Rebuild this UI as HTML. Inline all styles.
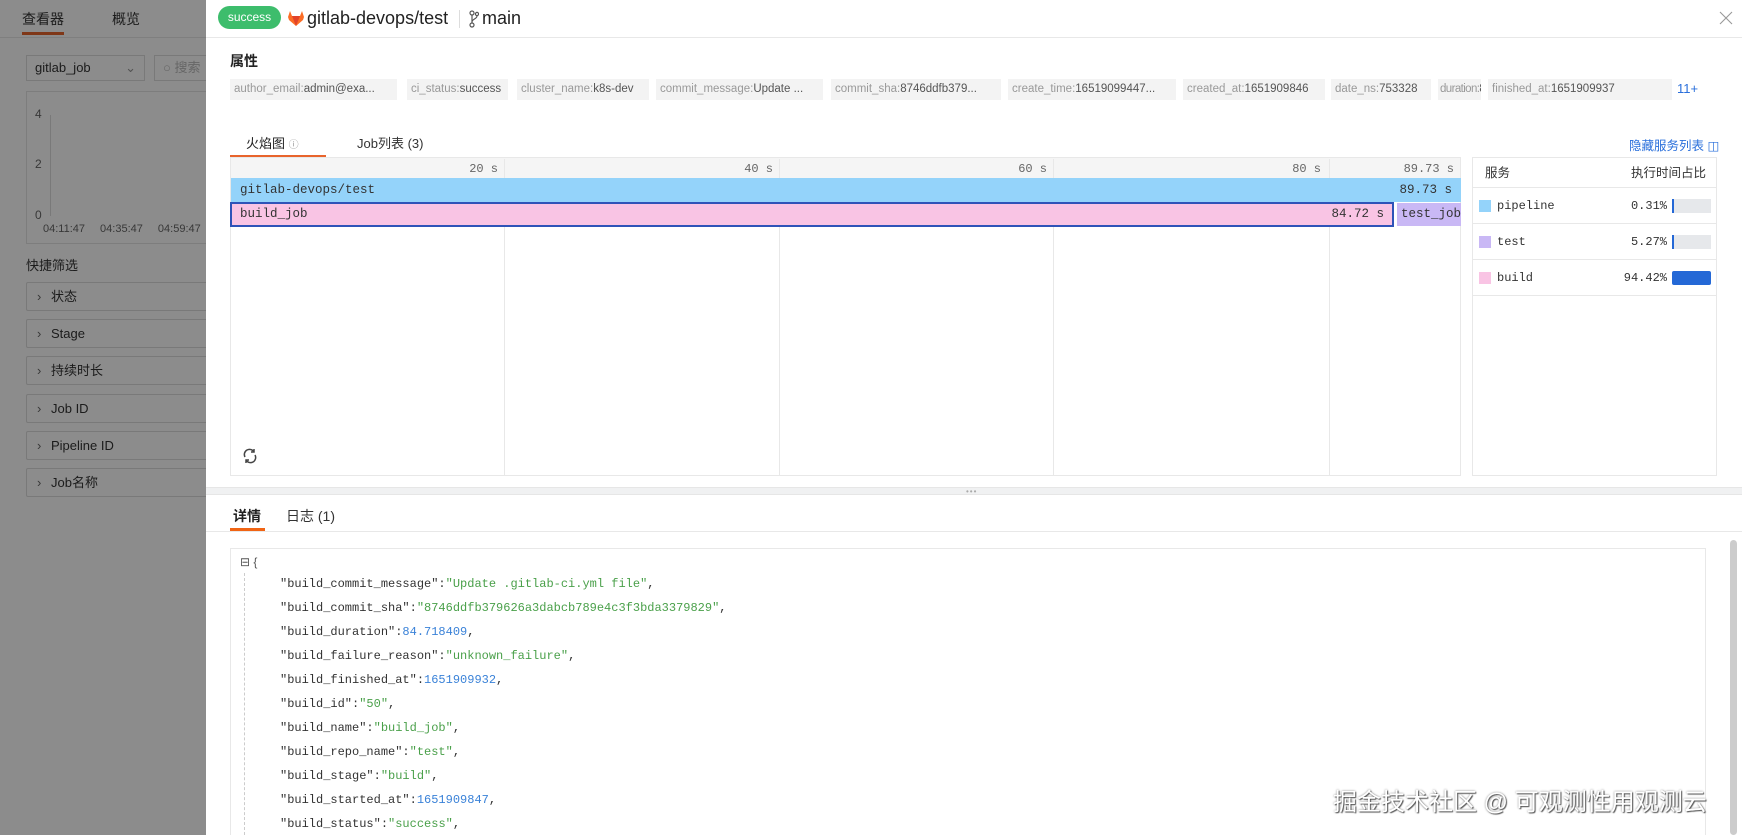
<!DOCTYPE html>
<html><head><meta charset="utf-8"><style>
*{box-sizing:border-box;margin:0;padding:0}
html,body{width:1742px;height:835px;overflow:hidden}
body{position:relative;background:#fff;font-family:"Liberation Sans","Noto Sans CJK SC",sans-serif;color:#333}
.abs{position:absolute}
.mono{font-family:"Liberation Mono","DejaVu Sans Mono",monospace}
#left{left:0;top:0;width:206px;height:835px;background:#fff}
#ov{left:0;top:0;width:206px;height:835px;background:rgba(0,0,0,0.45)}
.fi{position:absolute;left:26px;width:190px;height:29px;border:1px solid #ddd;border-radius:2px;font-size:13px;line-height:27px;padding-left:24px;color:#333}
.fi:before{content:"›";position:absolute;left:10px;color:#666}
#drawer{left:206px;top:0;width:1536px;height:835px;background:#fff}
.tag{position:absolute;top:79px;height:21px;background:#f3f3f3;font-size:11.5px;line-height:21px;padding:0 4px;color:#999;white-space:nowrap;overflow:hidden}
.tag b{font-weight:normal;color:#555}
.vl{position:absolute;top:159px;width:1px;height:317px;background:#e8e8e8}
.ax{position:absolute;top:162px;font-size:12px;color:#666}
.row{position:absolute;left:1473px;width:243px;height:36px;border-bottom:1px solid #e8e8e8;font-size:12px}
.sw{position:absolute;left:6px;top:12px;width:12px;height:12px}
.bar{position:absolute;left:199px;top:11px;width:39px;height:14px;background:#e6e8eb}
.jl{position:absolute;left:280px;font-size:12px;white-space:pre}
.s{color:#4aa04a}.n{color:#3a82d8}
</style></head><body>
<div id="left" class="abs">
 <div class="abs" style="left:22px;top:9px;font-size:14px">查看器</div>
 <div class="abs" style="left:112px;top:9px;font-size:14px">概览</div>
 <div class="abs" style="left:22px;top:32px;width:42px;height:3px;background:#e8642c"></div>
 <div class="abs" style="left:0;top:37px;width:206px;height:1px;background:#e8e8e8"></div>
 <div class="abs" style="left:26px;top:55px;width:119px;height:26px;border:1px solid #ddd;font-size:13px;line-height:24px;padding-left:8px">gitlab_job<span style="position:absolute;right:8px;color:#999">⌄</span></div>
 <div class="abs" style="left:154px;top:55px;width:60px;height:26px;border:1px solid #ddd;font-size:13px;line-height:24px;padding-left:8px;color:#bbb">○ 搜索</div>
 <div class="abs" style="left:26px;top:91px;width:190px;height:153px;border:1px solid #e3e3e3"></div>
 <div class="abs" style="left:50px;top:115px;width:1px;height:101px;background:#ddd"></div>
 <div class="abs" style="left:35px;top:107px;font-size:12px;color:#666">4</div>
 <div class="abs" style="left:35px;top:157px;font-size:12px;color:#666">2</div>
 <div class="abs" style="left:35px;top:208px;font-size:12px;color:#666">0</div>
 <div class="abs" style="left:43px;top:223px;font-size:11px;color:#666;word-spacing:12px">04:11:47 04:35:47 04:59:47</div>
 <div class="abs" style="left:26px;top:255px;font-size:13px">快捷筛选</div>
 <div class="fi" style="top:282px">状态</div>
 <div class="fi" style="top:319px">Stage</div>
 <div class="fi" style="top:356px">持续时长</div>
 <div class="fi" style="top:394px">Job ID</div>
 <div class="fi" style="top:431px">Pipeline ID</div>
 <div class="fi" style="top:468px">Job名称</div>
</div>
<div id="ov" class="abs"></div>
<div id="drawer" class="abs"></div>
<div class="abs" style="left:218px;top:6px;width:63px;height:23px;border-radius:12px;background:#3dbd6c;color:#fff;font-size:12px;line-height:23px;text-align:center">success</div>
<svg class="abs" style="left:288px;top:11px" width="16" height="15" viewBox="0 0 16 15"><path d="M8 15L1 9 0 6 2 0 4 5H12L14 0 16 6 15 9Z" fill="#fc6d26"/><path d="M8 15L4 5H12Z" fill="#e24329"/></svg>
<div class="abs" style="left:307px;top:8px;font-size:18px;color:#222">gitlab-devops/test</div>
<div class="abs" style="left:459px;top:10px;width:1px;height:18px;background:#ddd"></div>
<svg class="abs" style="left:469px;top:10px" width="10" height="18" viewBox="0 0 10 18"><circle cx="3" cy="3" r="2" fill="none" stroke="#555" stroke-width="1.2"/><circle cx="3" cy="15" r="2" fill="none" stroke="#555" stroke-width="1.2"/><circle cx="8" cy="4" r="1.6" fill="none" stroke="#555" stroke-width="1.2"/><path d="M3 5V13M8 6C8 9 3 9 3 12" fill="none" stroke="#555" stroke-width="1.2"/></svg>
<div class="abs" style="left:482px;top:8px;font-size:18px;color:#222">main</div>
<svg class="abs" style="left:1719px;top:11px" width="14" height="14" viewBox="0 0 14 14"><path d="M1 1L13 13M13 1L1 13" stroke="#999" stroke-width="1.1"/></svg>
<div class="abs" style="left:206px;top:37px;width:1536px;height:1px;background:#e8e8e8"></div>
<div class="abs" style="left:230px;top:51px;font-size:14px;font-weight:bold;color:#222">属性</div>
<div class="tag" style="left:230px;width:167px">author_email:<b>admin@exa...</b></div>
<div class="tag" style="left:407px;width:101px">ci_status:<b>success</b></div>
<div class="tag" style="left:517px;width:132px">cluster_name:<b>k8s-dev</b></div>
<div class="tag" style="left:656px;width:167px">commit_message:<b>Update ...</b></div>
<div class="tag" style="left:831px;width:170px">commit_sha:<b>8746ddfb379...</b></div>
<div class="tag" style="left:1008px;width:168px">create_time:<b>16519099447...</b></div>
<div class="tag" style="left:1183px;width:142px">created_at:<b>1651909846</b></div>
<div class="tag" style="left:1331px;width:100px">date_ns:<b>753328</b></div>
<div class="tag" style="left:1438px;width:43px;letter-spacing:-0.6px;padding:0 2px">duration:<b>89</b></div>
<div class="tag" style="left:1488px;width:184px">finished_at:<b>1651909937</b></div>
<div class="abs" style="left:1677px;top:81px;font-size:13px;color:#2a6fdb">11+</div>
<div class="abs" style="left:246px;top:133px;font-size:13px;color:#222">火焰图 <span style="font-size:10px;color:#999">ⓘ</span></div>
<div class="abs" style="left:357px;top:133px;font-size:13px;color:#333">Job列表 (3)</div>
<div class="abs" style="left:230px;top:155px;width:96px;height:2px;background:#e8642c"></div>
<div class="abs" style="left:1629px;top:135px;font-size:12.5px;color:#2a6fdb">隐藏服务列表 ◫</div>
<div class="abs" style="left:230px;top:157px;width:1231px;height:319px;border:1px solid #e8e8e8"></div>
<div class="abs" style="left:231px;top:158px;width:1229px;height:20px;background:#f5f5f5"></div>
<div class="vl" style="left:504px"></div><div class="vl" style="left:779px"></div><div class="vl" style="left:1053px"></div><div class="vl" style="left:1329px"></div>
<div class="ax mono" style="left:440px;width:58px;text-align:right">20 s</div>
<div class="ax mono" style="left:715px;width:58px;text-align:right">40 s</div>
<div class="ax mono" style="left:989px;width:58px;text-align:right">60 s</div>
<div class="ax mono" style="left:1263px;width:58px;text-align:right">80 s</div>
<div class="ax mono" style="left:1380px;width:74px;text-align:right">89.73 s</div>
<div class="abs mono" style="left:231px;top:178px;width:1230px;height:24px;background:#94d3fa;font-size:12.5px;line-height:24px;padding:0 9px">gitlab-devops/test<span style="float:right">89.73 s</span></div>
<div class="abs mono" style="left:230px;top:202px;width:1164px;height:25px;background:#f9c4e4;border:2px solid #2f53b8;font-size:12.5px;line-height:21px;padding:0 8px">build_job<span style="float:right">84.72 s</span></div>
<div class="abs mono" style="left:1397px;top:203px;width:64px;height:23px;background:#c9b8f5;font-size:12.5px;line-height:23px;padding-left:4px;overflow:hidden">test_job</div>
<svg class="abs" style="left:242px;top:448px" width="16" height="16" viewBox="0 0 16 16" fill="none" stroke="#444" stroke-width="1.5"><path d="M3 9A5 5 0 0 1 12 4"/><path d="M13 7A5 5 0 0 1 4 12"/><path d="M12 1V4H9" /><path d="M4 15V12H7"/></svg>
<div class="abs" style="left:1472px;top:157px;width:245px;height:319px;border:1px solid #e8e8e8"></div>
<div class="row" style="top:158px;height:30px;line-height:30px"><span style="position:absolute;left:12px;font-size:12.5px">服务</span><span style="position:absolute;right:10px;font-size:12.5px">执行时间占比</span></div>
<div class="row mono" style="top:188px;line-height:36px"><div class="sw" style="background:#94d3fa"></div><span style="position:absolute;left:24px">pipeline</span><span style="position:absolute;right:49px">0.31%</span><div class="bar"><div style="width:2px;height:14px;background:#2468d6"></div></div></div>
<div class="row mono" style="top:224px;line-height:36px"><div class="sw" style="background:#c9b8f5"></div><span style="position:absolute;left:24px">test</span><span style="position:absolute;right:49px">5.27%</span><div class="bar"><div style="width:2px;height:14px;background:#2468d6"></div></div></div>
<div class="row mono" style="top:260px;line-height:36px"><div class="sw" style="background:#f9c4e4"></div><span style="position:absolute;left:24px">build</span><span style="position:absolute;right:49px">94.42%</span><div class="bar" style="background:#2468d6;border-radius:2px"></div></div>
<div class="abs" style="left:206px;top:487px;width:1536px;height:8px;background:#f0f1f2;border-top:1px solid #e6e6e6;border-bottom:1px solid #e6e6e6"></div>
<div class="abs" style="left:966px;top:487px;font-size:8px;color:#aaa;letter-spacing:1px">•••</div>
<div class="abs" style="left:233px;top:506px;font-size:14px;font-weight:bold;color:#222">详情</div>
<div class="abs" style="left:286px;top:506px;font-size:14px;color:#333">日志 (1)</div>
<div class="abs" style="left:230px;top:528px;width:35px;height:3px;background:#f06414"></div>
<div class="abs" style="left:206px;top:531px;width:1536px;height:1px;background:#e8e8e8"></div>
<div class="abs" style="left:230px;top:548px;width:1476px;height:290px;border:1px solid #e8e8e8"></div>
<div class="abs" style="left:1730px;top:540px;width:7px;height:295px;background:#ccc;border-radius:4px"></div>
<div class="abs" style="left:240px;top:555px;font-size:12px;color:#555">⊟ {</div>
<div class="abs" style="left:244px;top:573px;width:0;height:262px;border-left:1px dashed #ccc"></div>
<div class="jl mono" style="top:577px">"build_commit_message":<span class="s">"Update .gitlab-ci.yml file"</span>,</div>
<div class="jl mono" style="top:601px">"build_commit_sha":<span class="s">"8746ddfb379626a3dabcb789e4c3f3bda3379829"</span>,</div>
<div class="jl mono" style="top:625px">"build_duration":<span class="n">84.718409</span>,</div>
<div class="jl mono" style="top:649px">"build_failure_reason":<span class="s">"unknown_failure"</span>,</div>
<div class="jl mono" style="top:673px">"build_finished_at":<span class="n">1651909932</span>,</div>
<div class="jl mono" style="top:697px">"build_id":<span class="s">"50"</span>,</div>
<div class="jl mono" style="top:721px">"build_name":<span class="s">"build_job"</span>,</div>
<div class="jl mono" style="top:745px">"build_repo_name":<span class="s">"test"</span>,</div>
<div class="jl mono" style="top:769px">"build_stage":<span class="s">"build"</span>,</div>
<div class="jl mono" style="top:793px">"build_started_at":<span class="n">1651909847</span>,</div>
<div class="jl mono" style="top:817px">"build_status":<span class="s">"success"</span>,</div>
<div class="abs" style="left:1333px;top:782px;font-size:24px;color:#fff;text-shadow:1px 1px 1px #555,0 0 2px #888;white-space:nowrap">掘金技术社区 @ 可观测性用观测云</div>
</body></html>
